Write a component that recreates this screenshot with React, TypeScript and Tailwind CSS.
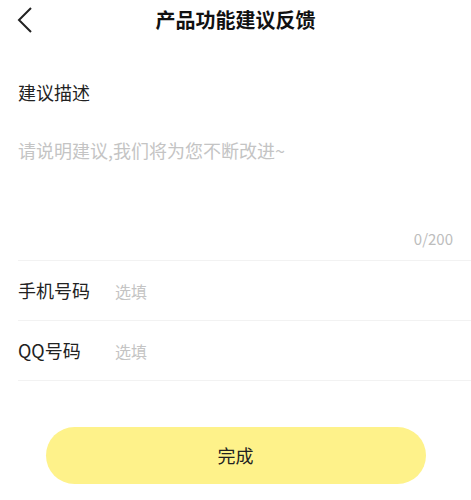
import React from 'react';

const font = { fontFamily: '"Noto Sans CJK SC", "Noto Sans", sans-serif' };

const Row = ({ label }: { label: string }) => (
  <div className="flex items-center h-[60px] border-b border-[#f2f2f2] ml-[18px]">
    <span className="w-[97px] text-[18px] text-[#222]">{label}</span>
    <span className="text-[16px] text-[#c4c4c4]">选填</span>
  </div>
);

export default function App() {
  return (
    <div className="w-[471px] h-[500px] bg-white overflow-hidden" style={font}>
      <div className="relative h-[40px] flex items-center justify-center">
        <svg
          className="absolute left-[17px] top-[7px]"
          width="16"
          height="26"
          viewBox="0 0 16 26"
          fill="none"
          stroke="#222"
          strokeWidth="2"
        >
          <path d="M14 1 L2 13 L14 25" />
        </svg>
        <h1 className="text-[20px] font-bold text-[#111]">产品功能建议反馈</h1>
      </div>

      <div className="px-[18px] pt-[38px] text-[18px] text-[#222] leading-[28px]">建议描述</div>

      <div className="ml-[18px] border-b border-[#f2f2f2] h-[155px] relative">
        <div className="pt-[30px] text-[18px] text-[#c4c4c4] leading-[28px]">
          请说明建议,我们将为您不断改进~
        </div>
        <span className="absolute right-[18px] bottom-[10px] text-[15px] text-[#bdbdbd]">0/200</span>
      </div>

      <Row label="手机号码" />
      <Row label="QQ号码" />

      <div className="flex justify-center pt-[46px]">
        <button className="w-[380px] h-[57px] rounded-full bg-[#fef28a] text-[18px] text-[#222]">
          完成
        </button>
      </div>
    </div>
  );
}
